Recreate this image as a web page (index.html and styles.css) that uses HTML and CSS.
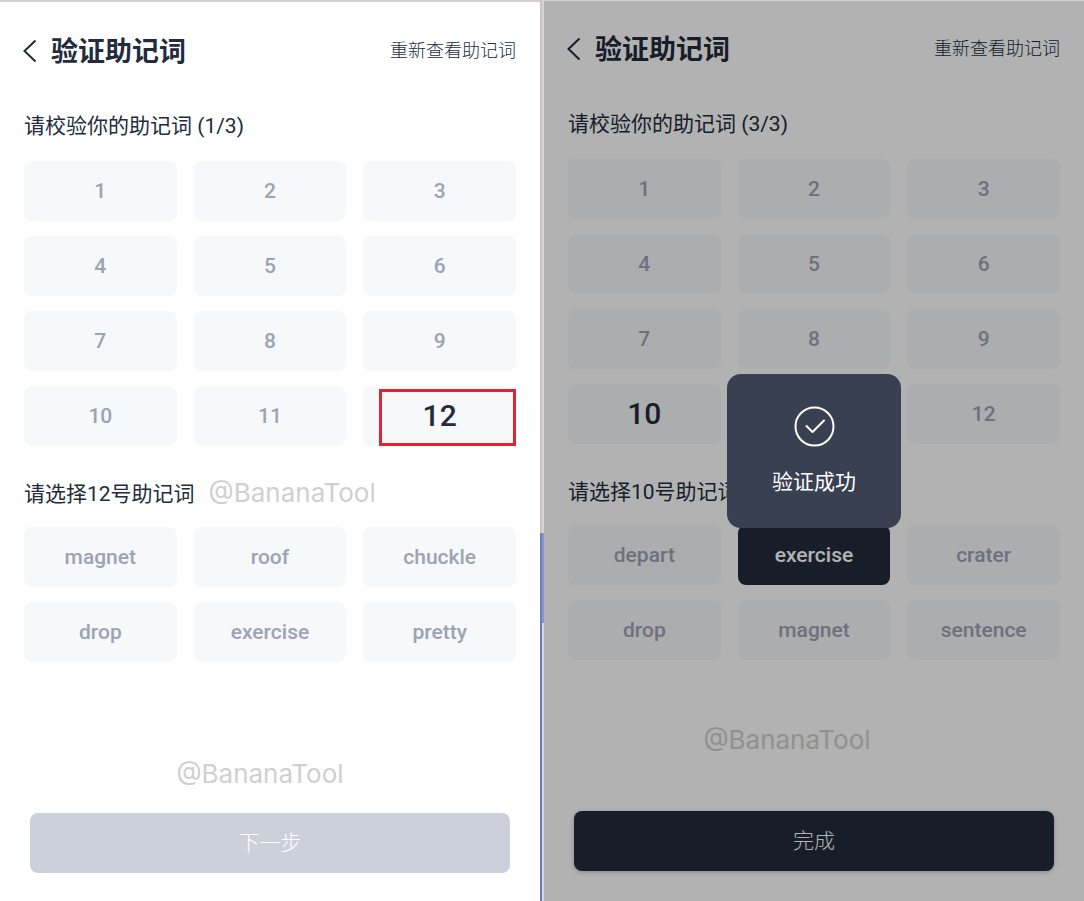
FILE: index.html
```html
<!DOCTYPE html>
<html lang="zh-CN">
<head>
    <meta charset="UTF-8">
    <meta name="viewport" content="width=device-width, initial-scale=1.0">
    <title>验证助记词</title>
    <link rel="stylesheet" href="styles.css">
</head>
<body>

<div class="screens">

    <!-- Step 1 -->
    <section class="panel">
        <header class="header">
            <button type="button" class="back" aria-label="返回">
                <svg width="14" height="24" viewBox="0 0 14 24"><path d="M12.5 1.5 L1.5 12 L12.5 22.5"/></svg>
            </button>
            <h1>验证助记词</h1>
            <a href="#" class="review">重新查看助记词</a>
        </header>

        <p class="label">请校验你的助记词 (1/3)</p>
        <div class="grid">
            <div class="cell">1</div>
            <div class="cell">2</div>
            <div class="cell">3</div>
            <div class="cell">4</div>
            <div class="cell">5</div>
            <div class="cell">6</div>
            <div class="cell">7</div>
            <div class="cell">8</div>
            <div class="cell">9</div>
            <div class="cell">10</div>
            <div class="cell">11</div>
            <div class="cell current marked">12</div>
        </div>

        <p class="label label-words">请选择12号助记词 <span class="watermark">@BananaTool</span></p>
        <div class="grid">
            <button type="button" class="cell">magnet</button>
            <button type="button" class="cell">roof</button>
            <button type="button" class="cell">chuckle</button>
            <button type="button" class="cell">drop</button>
            <button type="button" class="cell">exercise</button>
            <button type="button" class="cell">pretty</button>
        </div>

        <p class="watermark watermark-footer">@BananaTool</p>
        <button type="button" class="submit" disabled>下一步</button>
    </section>

    <div class="divider"></div>

    <!-- Step 3, verified -->
    <section class="panel panel-done">
        <header class="header">
            <button type="button" class="back" aria-label="返回">
                <svg width="14" height="24" viewBox="0 0 14 24"><path d="M12.5 1.5 L1.5 12 L12.5 22.5"/></svg>
            </button>
            <h1>验证助记词</h1>
            <a href="#" class="review">重新查看助记词</a>
        </header>

        <p class="label">请校验你的助记词 (3/3)</p>
        <div class="grid">
            <div class="cell">1</div>
            <div class="cell">2</div>
            <div class="cell">3</div>
            <div class="cell">4</div>
            <div class="cell">5</div>
            <div class="cell">6</div>
            <div class="cell">7</div>
            <div class="cell">8</div>
            <div class="cell">9</div>
            <div class="cell current">10</div>
            <div class="cell"></div>
            <div class="cell">12</div>
        </div>

        <p class="label label-words">请选择10号助记词</p>
        <div class="grid">
            <button type="button" class="cell">depart</button>
            <button type="button" class="cell selected">exercise</button>
            <button type="button" class="cell">crater</button>
            <button type="button" class="cell">drop</button>
            <button type="button" class="cell">magnet</button>
            <button type="button" class="cell">sentence</button>
        </div>

        <p class="watermark watermark-footer">@BananaTool</p>
        <button type="button" class="submit">完成</button>

        <!-- Success toast -->
        <div class="overlay">
            <div class="toast" role="status">
                <svg width="42" height="42" viewBox="0 0 42 42">
                    <circle cx="21.5" cy="21.5" r="19"/>
                    <path d="M13.5 21 L19.5 27 L31 15.5"/>
                </svg>
                <span>验证成功</span>
            </div>
        </div>
    </section>

</div>

</body>
</html>
```
FILE: styles.css
```css
* {
    box-sizing: border-box;
}

body {
    margin: 0;
    color: #222c3d;
    font-family: Roboto, "Noto Sans CJK SC", sans-serif;
    font-size: 21px;
}

h1, p {
    margin: 0;
}

button {
    border: 0;
    padding: 0;
    font: inherit;
    color: inherit;
    cursor: pointer;
}

.screens {
    display: grid;
    grid-template-columns: 1fr 4px 1fr;
    min-height: 100vh;
}

.panel {
    position: relative;
    display: flex;
    flex-direction: column;
    padding: 29px 24px 28px;
    border-top: 2px solid #d6cfd1;
    background: #fff;
}

.panel-done {
    padding-top: 28px;
    padding-bottom: 30px;
    border-top-width: 1px;
}

.divider {
    background:
        linear-gradient(#d9d3d6 533px, #8b97cb 533px, #8b97cb 623px, #d9d6e0 623px) right / 2px 100% no-repeat,
        linear-gradient(#c9c6c9 533px, #6b7eb9 533px) left / 2px 100% no-repeat;
}

/* Header */
.header {
    display: flex;
    align-items: center;
    height: 40px;
}

.back {
    display: flex;
    margin: 0 14px 0 -1px;
    background: none;
}

.back svg {
    fill: none;
    stroke: #222c3d;
    stroke-width: 2;
}

h1 {
    padding-top: 2px;
    font-size: 27px;
    line-height: 40px;
    font-weight: 700;
}

.review {
    margin-left: auto;
    padding-bottom: 4px;
    color: inherit;
    font-size: 18px;
    font-weight: 300;
    text-decoration: none;
}

/* Labels and word grid */
.label {
    display: flex;
    align-items: center;
    gap: 14px;
    height: 32px;
    margin: 39px 0 19px;
    line-height: 32px;
}

.label-words {
    margin: 32px 0 17px;
}

.grid {
    display: grid;
    grid-template-columns: repeat(3, 1fr);
    gap: 15px 17px;
}

.cell {
    position: relative;
    height: 60px;
    border-radius: 8px;
    background: #f7f8fa;
    color: #9ca3b5;
    font-weight: 500;
    line-height: 60px;
    text-align: center;
}

.current {
    color: #222c3d;
    font-size: 30px;
}

.marked::after {
    content: "";
    position: absolute;
    inset: 3px 0 0 16px;
    border: 3px solid #dc2630;
}

.selected {
    background: #222c3d;
    color: #fff;
}

.watermark {
    color: #d0d0d0;
    font-family: Inter, sans-serif;
    font-size: 26px;
    font-weight: 400;
    line-height: 32px;
}

.label .watermark {
    padding-bottom: 3px;
}

.watermark-footer {
    margin: 96px 20px 23px 0;
    text-align: center;
}

.panel-done .watermark-footer {
    margin: 64px 54px 55px 0;
}

.submit {
    height: 60px;
    margin: 0 6px;
    padding-bottom: 4px;
    border-radius: 8px;
    background: #222c3d;
    color: #fff;
    font-weight: 300;
    box-shadow: 0 1px 4px rgba(34, 44, 61, 0.3);
}

.submit:disabled {
    background: #ccd0da;
    box-shadow: none;
    cursor: default;
}

/* Overlay */
.overlay {
    position: absolute;
    inset: 0;
    display: flex;
    align-items: center;
    justify-content: center;
    background: rgba(0, 0, 0, 0.3);
}

.toast {
    display: flex;
    flex-direction: column;
    align-items: center;
    gap: 17px;
    width: 174px;
    height: 154px;
    padding-top: 31px;
    border-radius: 14px;
    background: #394052;
    color: #fff;
    line-height: 36px;
}

.toast svg {
    fill: none;
    stroke: #fff;
    stroke-width: 2;
    stroke-linecap: round;
    stroke-linejoin: round;
}
```
